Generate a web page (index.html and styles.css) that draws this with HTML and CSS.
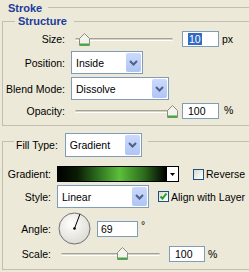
FILE: index.html
```html
<!DOCTYPE html>
<html>
<head>
<title>Stroke</title>
<link rel="stylesheet" href="styles.css">
</head>
<body>

<div class="title"><b>Stroke</b><i class="rule"></i></div>

<fieldset class="group structure">
  <legend>Structure</legend>

  <div class="row size">
    <label>Size:</label>
    <div class="slider">
      <div class="track"></div>
      <span class="thumb" style="left:8px"><svg width="11" height="13" viewBox="0 0 11 13"><path d="M.5 5.5 5.5.5l5 5v7H.5z" fill="#f3f3ee" stroke="#8c8c80"/><path d="M1 11.5h9" stroke="#3caa3c" stroke-width="2"/></svg></span>
    </div>
    <div class="input"><span class="hl">10</span></div>
    <span class="unit">px</span>
  </div>

  <div class="row position">
    <label>Position:</label>
    <div class="select w72"><span>Inside</span><i class="btn"><svg width="9" height="6" viewBox="0 0 9 6"><path d="M1 1l3.5 3.5L8 1" fill="none" stroke="#4d6185" stroke-width="2"/></svg></i></div>
  </div>

  <div class="row blend">
    <label>Blend Mode:</label>
    <div class="select w98"><span>Dissolve</span><i class="btn"><svg width="9" height="6" viewBox="0 0 9 6"><path d="M1 1l3.5 3.5L8 1" fill="none" stroke="#4d6185" stroke-width="2"/></svg></i></div>
  </div>

  <div class="row opacity">
    <label>Opacity:</label>
    <div class="slider">
      <div class="track"></div>
      <span class="thumb" style="left:96px"><svg width="11" height="13" viewBox="0 0 11 13"><path d="M.5 5.5 5.5.5l5 5v7H.5z" fill="#f3f3ee" stroke="#8c8c80"/><path d="M1 11.5h9" stroke="#3caa3c" stroke-width="2"/></svg></span>
    </div>
    <div class="input">100</div>
    <span class="unit pct">%</span>
  </div>
</fieldset>

<fieldset class="group fill">
  <legend>
    <div class="legend-row">
      <label>Fill Type:</label>
      <div class="select w77"><span>Gradient</span><i class="btn"><svg width="9" height="6" viewBox="0 0 9 6"><path d="M1 1l3.5 3.5L8 1" fill="none" stroke="#4d6185" stroke-width="2"/></svg></i></div>
    </div>
  </legend>

  <div class="row gradient-row">
    <label>Gradient:</label>
    <div class="swatch"></div>
    <div class="swatch-btn"><svg width="5" height="3" viewBox="0 0 5 3"><path d="M0 0h5L2.5 3z" fill="#000"/></svg></div>
    <span class="check reverse"></span>
    <span class="check-text">Reverse</span>
  </div>

  <div class="row style-row">
    <label>Style:</label>
    <div class="select w92"><span>Linear</span><i class="btn"><svg width="9" height="6" viewBox="0 0 9 6"><path d="M1 1l3.5 3.5L8 1" fill="none" stroke="#4d6185" stroke-width="2"/></svg></i></div>
    <span class="check align"><svg width="9" height="9" viewBox="0 0 9 9"><path d="M1.5 4.5l2 2 4-5" fill="none" stroke="#21a121" stroke-width="2"/></svg></span>
    <span class="check-text">Align with Layer</span>
  </div>

  <div class="row angle-row">
    <label>Angle:</label>
    <svg class="dial" width="35" height="33" viewBox="0 0 35 33">
      <defs>
        <radialGradient id="dg" cx="40%" cy="35%" r="70%">
          <stop offset="0" stop-color="#ffffff"/>
          <stop offset="1" stop-color="#dcdad0"/>
        </radialGradient>
      </defs>
      <circle cx="17.5" cy="16.5" r="15.5" fill="url(#dg)" stroke="#6b6f78"/>
      <line x1="17.5" y1="16.5" x2="23" y2="2" stroke="#000"/>
      <circle cx="17.5" cy="16.5" r="1.3" fill="#000"/>
    </svg>
    <div class="input angle">69</div>
    <span class="deg">°</span>
  </div>

  <div class="row scale-row">
    <label>Scale:</label>
    <div class="slider wide">
      <div class="track"></div>
      <span class="thumb" style="left:60px"><svg width="11" height="13" viewBox="0 0 11 13"><path d="M.5 5.5 5.5.5l5 5v7H.5z" fill="#f3f3ee" stroke="#8c8c80"/><path d="M1 11.5h9" stroke="#3caa3c" stroke-width="2"/></svg></span>
    </div>
    <div class="input short">100</div>
    <span class="unit">%</span>
  </div>
</fieldset>

</body>
</html>
```

FILE: styles.css
```css
body { margin: 0; width: 249px; height: 272px; overflow: hidden; background: #ece9d8; color: #000; font-family: "Liberation Sans", Arial, sans-serif; font-size: 10.5px; }

.title { display: flex; align-items: center; height: 15px; padding-left: 8px; }
.title b { font-size: 11px; color: #213c9c; }
.title .rule { flex: 1; border-top: 1px solid #c2bfae; margin-left: 6px; }

.group { margin: 0 -8px 0 2px; padding: 0; border: 1px solid #c2bfae; min-width: 0; }
.structure { padding-bottom: 6px; }
.structure legend { margin-left: 12px; padding: 0 7px 0 3px; font-weight: bold; font-size: 11px; line-height: 12px; color: #213c9c; }

.fill { margin-top: 7px; padding-bottom: 7px; }
.fill legend { margin-left: 11px; padding: 0 6px 0 2px; height: 16px; }
.legend-row { display: flex; align-items: center; height: 24px; }
.legend-row label { margin-right: 7px; }

.row { display: flex; align-items: center; }
.row > label { flex: none; text-align: right; margin-right: 6px; }
.structure .row > label { width: 62px; }
.fill .row > label { width: 48px; }

.size { margin-top: 4px; height: 16px; }
.position { margin-top: 4px; height: 23px; }
.blend { margin-top: 3px; height: 23px; }
.opacity { margin-top: 3px; height: 16px; }

.slider { position: relative; flex: none; width: 105px; height: 16px; margin-right: 6px; display: flex; align-items: center; }
.slider.wide { width: 106px; }
.track { flex: 1; margin: 1px 3px 0 4px; height: 1px; background: #d6d4c6; border-top: 1px solid #a4a296; border-bottom: 1px solid #fff; border-radius: 2px; }
.thumb { position: absolute; top: 2px; width: 11px; height: 13px; line-height: 0; }
.scale-row .thumb { top: 1px; }

.input { flex: none; box-sizing: border-box; width: 37px; height: 16px; border: 1px solid #7f9db9; background: #fff; padding-left: 5px; line-height: 14px; }
.input.angle { width: 41px; padding-left: 3px; margin-left: 5px; }
.input.short { width: 36px; }
.hl { background: #316ac5; color: #fff; padding: 0 1px; }
.unit { margin-left: 3px; }
.unit.pct { margin-left: 5px; margin-top: -3px; }
.deg { margin-left: 3px; margin-top: -7px; }

.select { flex: none; box-sizing: border-box; height: 23px; border: 1px solid #7f9db9; background: #fff; padding: 1px; display: flex; align-items: center; }
.select span { flex: 1; padding-left: 3px; }
.select .btn { width: 15px; align-self: stretch; background: linear-gradient(#cbd9fd, #b0c5f4); border-radius: 2px; display: flex; align-items: center; justify-content: center; }
.w72 { width: 72px; }
.w98 { width: 98px; }
.w77 { width: 77px; height: 24px; }
.w92 { width: 92px; }

.gradient-row { margin-top: 17px; height: 16px; }
.swatch { flex: none; box-sizing: border-box; width: 110px; height: 16px; border: 1px solid #000; background: linear-gradient(to right, #000 0%, #0a1c05 18%, #2f7420 38%, #5cbf3a 57%, #2c6a1c 80%, #000 100%); }
.swatch-btn { flex: none; box-sizing: border-box; width: 12px; height: 16px; border: 1px solid #000; border-left: none; background: #fff; display: flex; align-items: center; justify-content: center; }

.check { flex: none; box-sizing: border-box; width: 11px; height: 11px; border: 1px solid #1c5180; background: linear-gradient(135deg, #dcdcd5, #fff); display: flex; align-items: center; justify-content: center; }
.check.reverse { margin-left: 14px; }
.check.align { margin-left: 9px; }
.check-text { margin-left: 2px; white-space: nowrap; }

.style-row { margin-top: 3px; height: 23px; }
.angle-row { margin-top: 4px; height: 33px; }
.scale-row { margin-top: 1px; height: 16px; }
```
